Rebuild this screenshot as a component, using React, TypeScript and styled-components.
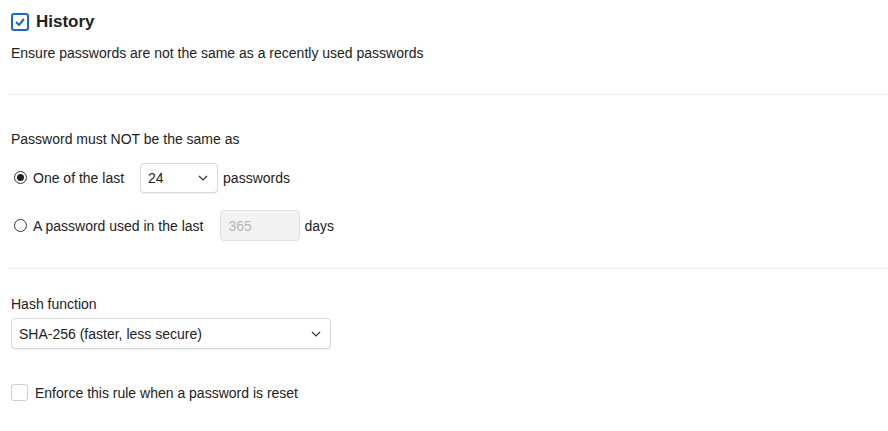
import React from "react";
import styled, { createGlobalStyle } from "styled-components";

const Global = createGlobalStyle`
  html, body { margin: 0; padding: 0; background: #fff; }
  body { font-family: "Liberation Sans", Arial, sans-serif; color: #222; }
`;

const Page = styled.div`
  padding: 12px 0 0 8px;
  width: 880px;
`;

const Section = styled.div<{ $pt?: number; $pb?: number }>`
  padding: ${(p) => p.$pt ?? 0}px 0 ${(p) => p.$pb ?? 0}px 3px;
`;

const TitleRow = styled.div`
  display: flex;
  align-items: center;
  gap: 7px;
  height: 20px;
`;

const BlueCheck = styled.span`
  width: 14px;
  height: 14px;
  border: 2px solid #1769c2;
  border-radius: 3px;
  display: inline-flex;
  align-items: center;
  justify-content: center;
`;

const Title = styled.span`
  font-size: 17px;
  font-weight: 700;
  color: #1f1f1f;
`;

const Text = styled.div<{ $mt?: number }>`
  font-size: 14px;
  color: #222;
  margin-top: ${(p) => p.$mt ?? 0}px;
`;

const Divider = styled.hr`
  border: none;
  border-top: 1px solid #ececec;
  margin: 0;
`;

const Row = styled.div<{ $mt?: number }>`
  display: flex;
  align-items: center;
  height: 31px;
  margin-top: ${(p) => p.$mt ?? 0}px;
  font-size: 14px;
`;

const Radio = styled.span<{ $on?: boolean }>`
  width: 11px;
  height: 11px;
  border: 1px solid #333;
  border-radius: 50%;
  display: inline-flex;
  align-items: center;
  justify-content: center;
  margin: 0 6px 0 3px;
  &::after {
    content: "";
    display: ${(p) => (p.$on ? "block" : "none")};
    width: 7px;
    height: 7px;
    border-radius: 50%;
    background: #222;
  }
`;

const SelectBox = styled.div<{ $w: number; $h?: number; $mt?: number }>`
  width: ${(p) => p.$w}px;
  height: ${(p) => p.$h ?? 30}px;
  margin-top: ${(p) => p.$mt ?? 0}px;
  box-sizing: border-box;
  border: 1px solid #d8d8d8;
  border-radius: 4px;
  display: flex;
  align-items: center;
  justify-content: space-between;
  padding: 0 9px 0 7px;
  font-size: 14px;
  color: #222;
  background: #fff;
  box-shadow: 0 1px 1px rgba(0, 0, 0, 0.06);
`;

const DisabledInput = styled.div`
  width: 80px;
  height: 31px;
  box-sizing: border-box;
  border: 1px solid #e2e2e2;
  border-radius: 4px;
  background: #f3f3f3;
  color: #b5b5b5;
  display: flex;
  align-items: center;
  padding: 0 7px;
  font-size: 14px;
`;

const Label = styled.span<{ $ml?: number; $mr?: number }>`
  margin-left: ${(p) => p.$ml ?? 0}px;
  margin-right: ${(p) => p.$mr ?? 0}px;
`;

const CheckRow = styled.div<{ $mt?: number }>`
  display: flex;
  align-items: center;
  gap: 7px;
  font-size: 14px;
  margin-top: ${(p) => p.$mt ?? 0}px;
`;

const EmptyCheck = styled.span`
  width: 17px;
  height: 17px;
  border: 1px solid #cfcfcf;
  border-radius: 3px;
  box-sizing: border-box;
`;

const Chevron = () => (
  <svg width="10" height="6" viewBox="0 0 10 6">
    <path d="M1 1l4 4 4-4" fill="none" stroke="#333" strokeWidth="1.2" />
  </svg>
);

export default function App() {
  return (
    <>
      <Global />
      <Page>
        <Section $pb={33}>
          <TitleRow>
            <BlueCheck>
              <svg width="10" height="8" viewBox="0 0 10 8">
                <path d="M1 4l3 3 5-6" fill="none" stroke="#1769c2" strokeWidth="2" />
              </svg>
            </BlueCheck>
            <Title>History</Title>
          </TitleRow>
          <Text $mt={13}>Ensure passwords are not the same as a recently used passwords</Text>
        </Section>
        <Divider />
        <Section $pt={36} $pb={27}>
          <Text>Password must NOT be the same as</Text>
          <Row $mt={15}>
            <Radio $on />
            <Label $mr={16}>One of the last</Label>
            <SelectBox $w={78}>
              <span>24</span>
              <Chevron />
            </SelectBox>
            <Label $ml={5}>passwords</Label>
          </Row>
          <Row $mt={17}>
            <Radio />
            <Label $mr={17}>A password used in the last</Label>
            <DisabledInput>365</DisabledInput>
            <Label $ml={4}>days</Label>
          </Row>
        </Section>
        <Divider />
        <Section $pt={27}>
          <Text>Hash function</Text>
          <SelectBox $w={320} $h={31} $mt={6}>
            <span>SHA-256 (faster, less secure)</span>
            <Chevron />
          </SelectBox>
          <CheckRow $mt={35}>
            <EmptyCheck />
            <span>Enforce this rule when a password is reset</span>
          </CheckRow>
        </Section>
      </Page>
    </>
  );
}
